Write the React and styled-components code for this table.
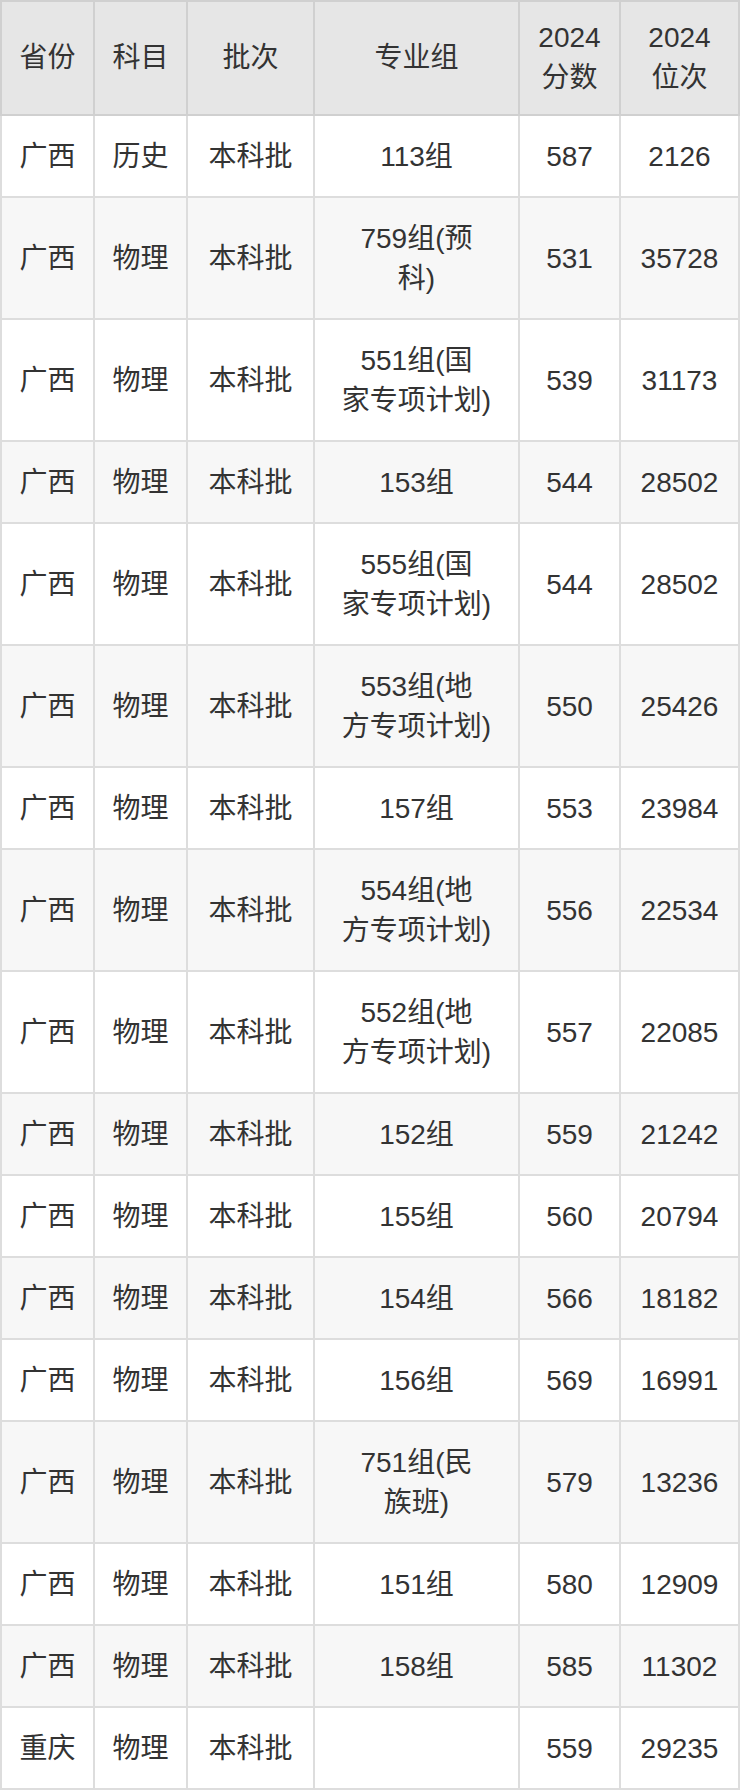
import React from "react";
import styled, { createGlobalStyle } from "styled-components";

const GlobalStyle = createGlobalStyle`
  html, body {
    margin: 0;
    padding: 0;
    background: #fff;
  }
  body {
    font-family: "Liberation Sans", "Noto Sans CJK SC", sans-serif;
    color: #333;
  }
`;

const Table = styled.table`
  width: 740px;
  table-layout: fixed;
  border-collapse: collapse;
  font-size: 28px;
  line-height: 40px;
`;

const HeadCell = styled.th`
  background: #e6e6e6;
  border: 2px solid #d0d0d0;
  padding: 16px 8px;
  font-weight: normal;
  text-align: center;
  vertical-align: middle;
  white-space: nowrap;
`;

const Row = styled.tr`
  background: ${(props) => (props.striped ? "#f7f7f7" : "#fff")};
`;

const Cell = styled.td`
  border: 2px solid #dddddd;
  padding: 21px 8px 19px;
  text-align: center;
  vertical-align: middle;
  white-space: nowrap;
`;

const columns = [93, 93, 127, 205, 101, 119];

const headers = [["省份"], ["科目"], ["批次"], ["专业组"], ["2024", "分数"], ["2024", "位次"]];

const rows = [
  ["广西", "历史", "本科批", ["113组"], "587", "2126"],
  ["广西", "物理", "本科批", ["759组(预", "科)"], "531", "35728"],
  ["广西", "物理", "本科批", ["551组(国", "家专项计划)"], "539", "31173"],
  ["广西", "物理", "本科批", ["153组"], "544", "28502"],
  ["广西", "物理", "本科批", ["555组(国", "家专项计划)"], "544", "28502"],
  ["广西", "物理", "本科批", ["553组(地", "方专项计划)"], "550", "25426"],
  ["广西", "物理", "本科批", ["157组"], "553", "23984"],
  ["广西", "物理", "本科批", ["554组(地", "方专项计划)"], "556", "22534"],
  ["广西", "物理", "本科批", ["552组(地", "方专项计划)"], "557", "22085"],
  ["广西", "物理", "本科批", ["152组"], "559", "21242"],
  ["广西", "物理", "本科批", ["155组"], "560", "20794"],
  ["广西", "物理", "本科批", ["154组"], "566", "18182"],
  ["广西", "物理", "本科批", ["156组"], "569", "16991"],
  ["广西", "物理", "本科批", ["751组(民", "族班)"], "579", "13236"],
  ["广西", "物理", "本科批", ["151组"], "580", "12909"],
  ["广西", "物理", "本科批", ["158组"], "585", "11302"],
  ["重庆", "物理", "本科批", [""], "559", "29235"],
];

function Lines({ parts }) {
  return parts.map((part, i) => (
    <React.Fragment key={i}>
      {i > 0 && <br />}
      {part}
    </React.Fragment>
  ));
}

export default function App() {
  return (
    <>
      <GlobalStyle />
      <Table>
        <colgroup>
          {columns.map((w, i) => (
            <col key={i} style={{ width: w }} />
          ))}
        </colgroup>
        <thead>
          <tr>
            {headers.map((h, i) => (
              <HeadCell key={i}>
                <Lines parts={h} />
              </HeadCell>
            ))}
          </tr>
        </thead>
        <tbody>
          {rows.map((r, i) => (
            <Row key={i} striped={i % 2 === 1}>
              <Cell>{r[0]}</Cell>
              <Cell>{r[1]}</Cell>
              <Cell>{r[2]}</Cell>
              <Cell>
                <Lines parts={r[3]} />
              </Cell>
              <Cell>{r[4]}</Cell>
              <Cell>{r[5]}</Cell>
            </Row>
          ))}
        </tbody>
      </Table>
    </>
  );
}
